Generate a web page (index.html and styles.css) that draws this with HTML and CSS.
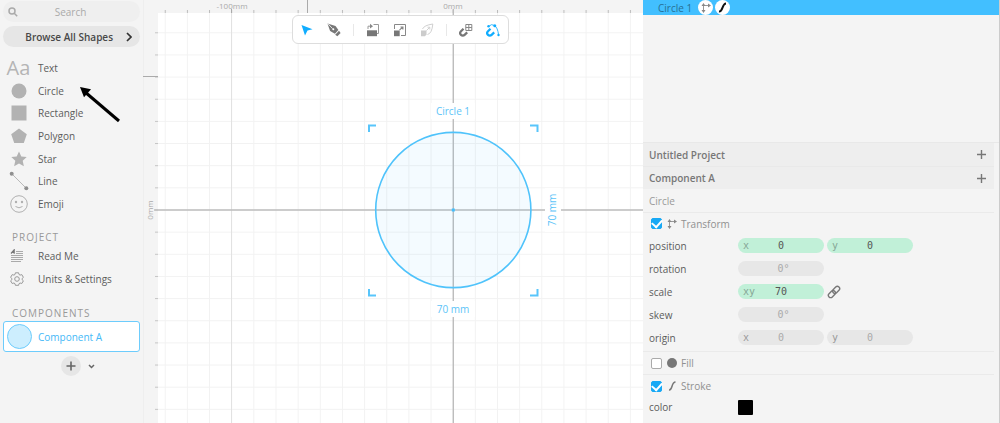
FILE: index.html
```html
<!DOCTYPE html>
<html lang="en">
<head>
<meta charset="utf-8">
<title>Untitled Project</title>
<link rel="stylesheet" href="styles.css">
</head>
<body>
<div class="app">
  <aside class="sidebar">
    <label class="search">
      <svg class="search-icon" viewBox="0 0 10 10" aria-hidden="true"><circle cx="4" cy="4" r="3"/><path d="M6.200 6.200L9.200 9.200"/></svg>
      <input class="search-input" type="text" placeholder="Search" aria-label="Search">
    </label>
    <button class="browse">Browse All Shapes
      <svg class="browse-arrow" viewBox="0 0 6 10" aria-hidden="true"><path d="M1 1l4 4-4 4"/></svg>
    </button>
    <nav class="shapes" aria-label="Shapes">
      <button class="item"><span class="glyph glyph-text" aria-hidden="true">Aa</span>Text</button>
      <button class="item"><span class="glyph"><svg width="16" height="16"><circle cx="8" cy="8" r="7.500" fill="#b2b2b2"/></svg></span>Circle</button>
      <button class="item"><span class="glyph"><svg width="16" height="16"><path d="M.500.500h15v15H.500z" fill="#b2b2b2"/></svg></span>Rectangle</button>
      <button class="item"><span class="glyph"><svg width="16" height="16"><path d="M8 .500L15.800 6.200 12.800 15H3.200L.200 6.200z" fill="#b2b2b2"/></svg></span>Polygon</button>
      <button class="item"><span class="glyph"><svg width="16" height="16"><path d="M8 .500l2.300 5 5.400.500-4 3.700 1.200 5.500L8 12.400l-4.900 2.800 1.200-5.500-4-3.700 5.400-.500z" fill="#b2b2b2"/></svg></span>Star</button>
      <button class="item"><span class="glyph"><svg width="20" height="20"><path d="M3 3l14 14" stroke="#b8b8b8"/><circle cx="2.700" cy="2.700" r="2" fill="#8f8f8f"/><circle cx="17.300" cy="17.300" r="2" fill="#8f8f8f"/></svg></span>Line</button>
      <button class="item"><span class="glyph"><svg width="18" height="18" fill="none" stroke="#b0b0b0"><circle cx="9" cy="9" r="8.300"/><path d="M5.500 11.500q3.500 2.600 7 0"/><circle cx="6" cy="7" r="1.200" fill="#b0b0b0" stroke="none"/><circle cx="12" cy="7" r="1.200" fill="#b0b0b0" stroke="none"/></svg></span>Emoji</button>
    </nav>
    <h2 class="heading">PROJECT</h2>
    <nav class="project" aria-label="Project">
      <button class="item"><span class="glyph glyph-small"><svg width="14" height="14" fill="none" stroke="#aaa"><path d="M6 2.500h7M6 4.500h7M1 6.500h12M1 8.500h12M1 10.500h12M1 12.500h10"/><path d="M1 4.500L4.200.800v3.900M2 3.500h2" stroke="#777" stroke-width="1.200"/></svg></span>Read Me</button>
      <button class="item"><span class="glyph glyph-small"><svg width="14" height="14" fill="none" stroke="#999" stroke-linejoin="round"><circle cx="7" cy="7" r="2.300"/><path d="M5.400.800h3.200l.400 1.700 1.100.600 1.700-.500 1.600 2.800-1.300 1.100v1.200l1.300 1.100-1.600 2.700-1.700-.500-1.100.700-.400 1.600H5.400L5 11.700 3.900 11l-1.700.500L.600 8.800l1.300-1.100V6.500L.600 5.400l1.600-2.800 1.700.500L5 2.500z"/></svg></span>Units &amp; Settings</button>
    </nav>
    <h2 class="heading heading-components">COMPONENTS</h2>
    <button class="component"><span class="component-thumb"></span>Component A</button>
    <div class="add">
      <button class="add-button" aria-label="Add component"><svg width="10" height="10"><path d="M5 .500v9M.500 5h9" stroke="#666" stroke-width="1.600"/></svg></button>
      <button class="add-more" aria-label="More"><svg width="7" height="5"><path d="M1 1l2.500 2.500L6 1" fill="none" stroke="#666" stroke-width="1.500"/></svg></button>
    </div>
    <svg class="pointer" viewBox="0 0 42 38" aria-hidden="true"><path d="M6 6L40 35" stroke="#000" stroke-width="3"/><path d="M1 1l11 2.200-7 8z"/></svg>
  </aside>

  <main class="stage">
    <svg class="drawing" role="img" aria-label="Drawing with Circle 1">
      <defs>
        <pattern id="grid" x="309.700" y="209.500" width="22.150" height="22.150" patternUnits="userSpaceOnUse"><path d="M.500 0v22.150M0 .500h22.150" stroke="#f2f2f2" fill="none"/></pattern>
        <pattern id="ticksX" x="309.700" y="0" width="22.150" height="13" patternUnits="userSpaceOnUse"><path d="M.500 10v3" stroke="#bbb"/></pattern>
        <pattern id="ticksY" x="0" y="209.500" width="15" height="22.150" patternUnits="userSpaceOnUse"><path d="M12 .500h3" stroke="#c4c4c4"/></pattern>
      </defs>
      <rect width="100%" height="100%" fill="#f4f4f4"/>
      <path d="M.500 0V2000" stroke="#eee"/>
      <rect x="15" y="13" width="100%" height="100%" fill="#fff"/>
      <rect x="15" y="13" width="100%" height="100%" fill="url(#grid)"/>
      <rect x="15" y="0" width="100%" height="13" fill="url(#ticksX)"/>
      <rect x="0" y="13" width="15" height="100%" fill="url(#ticksY)"/>
      <path d="M88.500 13V2000" stroke="#e2e2e2"/>
      <path d="M88.500 9v4M164.500 0v13M0 76.500h15" stroke="#aaa"/>
      <path d="M310.300 9V2000M11 210H3000" stroke="#bdbdbd" stroke-width="1.400"/>
      <text class="ruler-text" x="89" y="9">-100mm</text>
      <text class="ruler-text" x="310" y="9">0mm</text>
      <text class="ruler-text" transform="translate(10 210) rotate(-90)">0mm</text>
      <circle cx="310.300" cy="210" r="77.600" fill="#42bfff" fill-opacity=".06" stroke="#4fc3fb" stroke-width="1.600"/>
      <path d="M308.800 208.500h3v3h-3z" fill="#42bfff"/>
      <g fill="none" stroke="#58c5fb" stroke-width="2"><path d="M226 132v-6.500h7M387 125.500h7.500v6.500M226 289v6.500h7M387 295.500h7.500v-6.500"/></g>
      <path d="M288 103h44v16h-44zM288 301h44v16h-44zM402 188h16v44h-16z" fill="#fff"/>
      <text class="size-text" x="310" y="115">Circle 1</text>
      <text class="size-text size-value" x="310" y="313">70 mm</text>
      <text class="size-text size-value" transform="translate(413 210) rotate(-90)">70 mm</text>
    </svg>
    <div class="toolbar-area">
      <div class="toolbar" role="toolbar" aria-label="Tools">
        <button class="tool" aria-label="Select"><svg viewBox="0 0 14 14"><path d="M1.500 2l11 4.200-5 1.300L5 12.500z" fill="#10adff"/></svg></button>
        <button class="tool" aria-label="Pen"><svg viewBox="0 0 14 14"><path d="M.500.500l8 2.600 2.900 4-3.500 3.700-4.800-2.900z" fill="#777"/><path d="M1 .800l4.500 4.800" stroke="#fff" stroke-width=".8"/><circle cx="6.300" cy="6.200" r="1" fill="#fff"/><path d="M12 7.700l1.600 2.400-3.200 3.200-2.200-1.600z" fill="#777"/></svg></button>
        <span class="divider"></span>
        <button class="tool" aria-label="Rotate"><svg viewBox="0 0 14 14"><path d="M1 7.300h10v5.900H1z" fill="#777"/><path d="M7.500 1.500h5v9H11M2 6V3.200h3" fill="none" stroke="#999"/><path d="M4 .700l3 2.500L4 5.500z" fill="#888"/></svg></button>
        <button class="tool" aria-label="Scale"><svg viewBox="0 0 14 14"><path d="M1 7.500h5.700v5.700H1z" fill="#777"/><path d="M1.500 6V1.500h11v11H8" fill="none" stroke="#888"/><path d="M6.500 7.200L9.500 4.200M7.500 4h2.400v2.600" fill="none" stroke="#888" stroke-width="1.200"/></svg></button>
        <button class="tool" aria-label="Skew" disabled><svg viewBox="0 0 14 14"><path d="M1 7.500h5.500v4L5 13.200H1z" fill="#ccc"/><path d="M2.500 6Q4 2.300 12.800 1 12 10.500 7.500 11.500M6.500 7.500l3-3M7.500 4.200h2.300v2.300" fill="none" stroke="#d0d0d0"/></svg></button>
        <span class="divider"></span>
        <button class="tool" aria-label="Snap to grid"><svg viewBox="0 0 14 14"><path d="M4.500 5.700L2 8.300a2.500 2.500 0 003.600 3.600L8.200 9.400" fill="none" stroke="#777" stroke-width="2.200"/><path d="M6.800 1.500h6v6h-6zM9.800 1.500v6M6.800 4.500h6" fill="none" stroke="#888"/></svg></button>
        <button class="tool" aria-label="Snap to shapes"><svg viewBox="0 0 14 14"><path d="M4.500 5.700L2 8.300a2.500 2.500 0 003.600 3.600L8.200 9.400" fill="none" stroke="#10adff" stroke-width="2.200"/><path d="M2.500 3.500Q5.500.300 8.500 2.500q3.200 2.200 4 9" fill="none" stroke="#35b9ff"/><circle cx="2.500" cy="3.300" r="1.200" fill="#10adff"/><circle cx="8.800" cy="2.800" r="1.500" fill="#10adff"/><circle cx="12.500" cy="12" r="1.200" fill="#10adff"/></svg></button>
      </div>
    </div>
  </main>

  <aside class="panel">
    <div class="layers">
      <button class="layer">Circle 1
        <span class="badges">
          <span class="badge"><svg class="axes" viewBox="0 0 10 10"><path class="axes-line" d="M2.500 3v5M3.500 2.500H8"/><path d="M.500 7h4l-2 3zM7 .500v4l3-2zM.500 3l2-3 2 3z"/></svg></span>
          <span class="badge"><svg width="9" height="11"><path d="M1 9.500C5 10 4 1.500 8 1.500" fill="none" stroke="#111" stroke-width="2"/></svg></span>
        </span>
      </button>
    </div>
    <div class="inspector">
      <div class="bar">Untitled Project <button class="plus" aria-label="Add to project"><svg width="9" height="9"><path d="M4.500 0v9M0 4.500h9" stroke="#777" stroke-width="1.400"/></svg></button></div>
      <div class="bar">Component A <button class="plus" aria-label="Add to component"><svg width="9" height="9"><path d="M4.500 0v9M0 4.500h9" stroke="#777" stroke-width="1.400"/></svg></button></div>
      <div class="title">Circle</div>
      <section class="group">
        <label class="toggle"><input class="check" type="checkbox" checked><svg class="axes" viewBox="0 0 10 10"><path class="axes-line" d="M2.500 3v5M3.500 2.500H8"/><path d="M.500 7h4l-2 3zM7 .500v4l3-2zM.500 3l2-3 2 3z"/></svg>Transform</label>
        <div class="row"><span class="name">position</span>
          <label class="field set"><span class="axis">x</span><input class="value" type="text" value="0"></label>
          <label class="field set"><span class="axis">y</span><input class="value" type="text" value="0"></label></div>
        <div class="row"><label class="name" for="rotation">rotation</label>
          <span class="field"><input class="value angle" id="rotation" type="text" value="0°"></span></div>
        <div class="row"><span class="name">scale</span>
          <label class="field set"><span class="axis">xy</span><input class="value" type="text" value="70"></label>
          <button class="link" aria-label="Link axes"><svg width="14" height="14" fill="none" stroke="#777" stroke-width="1.400"><g transform="rotate(-45 7 7)"><rect x="0" y="4.700" width="8" height="4.600" rx="2.300"/><rect x="6" y="4.700" width="8" height="4.600" rx="2.300"/></g></svg></button></div>
        <div class="row"><label class="name" for="skew">skew</label>
          <span class="field"><input class="value angle" id="skew" type="text" value="0°"></span></div>
        <div class="row"><span class="name">origin</span>
          <label class="field"><span class="axis">x</span><input class="value" type="text" value="0"></label>
          <label class="field"><span class="axis">y</span><input class="value" type="text" value="0"></label></div>
      </section>
      <section class="group">
        <label class="toggle"><input class="check" type="checkbox"><svg class="kind" viewBox="0 0 10 10"><circle cx="5" cy="5" r="5" fill="#777"/></svg>Fill</label>
      </section>
      <section class="group">
        <label class="toggle"><input class="check" type="checkbox" checked><svg class="kind" viewBox="0 0 10 10"><path d="M2 9C6 9.500 4 1 8.500 1" fill="none" stroke="#777" stroke-width="1.500"/></svg>Stroke</label>
        <div class="row row-color"><span class="name">color</span><button class="swatch" aria-label="Stroke color"></button></div>
      </section>
    </div>
  </aside>
</div>
</body>
</html>
```

FILE: styles.css
```css
* { box-sizing: border-box; }

body {
  margin: 0;
  font-family: "Open Sans", "Noto Sans", sans-serif;
  font-size: 10px;
  line-height: 14px;
  color: #5c5c5c;
  background: #f4f4f4;
}

button {
  margin: 0;
  padding: 0;
  border: 0;
  background: none;
  font: inherit;
  color: inherit;
  text-align: left;
}

input { font: inherit; color: inherit; }
svg { display: block; flex: none; }

.app {
  display: grid;
  grid-template-columns: 143px minmax(0, 1fr) 357px;
  height: 100vh;
  overflow: hidden;
}

/* Sidebar */
.sidebar {
  position: relative;
  display: flex;
  flex-direction: column;
  padding: 1px 3px;
}

.search {
  display: flex;
  align-items: center;
  height: 21px;
  padding: 0 5px;
  border-radius: 11px;
  background: #efefef;
}

.search-icon {
  width: 10px;
  height: 10px;
  fill: none;
  stroke: #aaa;
  stroke-width: 1.5;
}

.search-input {
  flex: 1;
  min-width: 0;
  padding: 0 12px 0 0;
  border: 0;
  outline: 0;
  background: none;
  text-align: center;
}

.search-input::placeholder { color: #aaa; opacity: 1; }

.browse {
  display: flex;
  align-items: center;
  justify-content: flex-end;
  gap: 13px;
  height: 21px;
  margin-top: 4px;
  padding-right: 8px;
  border-radius: 11px;
  background: #e6e6e6;
  color: #484848;
  font-weight: 600;
}

.browse-arrow {
  width: 6px;
  height: 10px;
  fill: none;
  stroke: #333;
  stroke-width: 1.7;
}

.shapes {
  display: grid;
  grid-auto-rows: 1fr;
  height: 158px;
  margin-top: 10px;
}

.item {
  display: flex;
  align-items: center;
  gap: 6px;
  padding-left: 2px;
}

.glyph {
  display: flex;
  justify-content: center;
  width: 27px;
}

.glyph-text {
  color: #b5b5b5;
  font-size: 20px;
  line-height: 22px;
}

.glyph-small { padding-right: 4px; }

.heading {
  margin: 15px 0 0 9px;
  font-size: 10px;
  font-weight: 500;
  line-height: 14px;
  letter-spacing: 1px;
  color: #999;
}

.project {
  display: grid;
  grid-auto-rows: 23px;
}

.heading-components { margin-top: 16px; }

.component {
  display: flex;
  align-items: center;
  gap: 6px;
  height: 31px;
  margin-top: 1px;
  padding-left: 3px;
  border: 1px solid #6dccfc;
  border-radius: 3px;
  background: #fff;
  color: #45b9f7;
}

.component-thumb {
  width: 25px;
  height: 25px;
  border: 1px solid #6dccfc;
  border-radius: 50%;
  background: #cdeefe;
}

.add {
  display: flex;
  align-items: center;
  gap: 7px;
  margin: 4px 0 0 58px;
}

.add-button {
  display: grid;
  place-items: center;
  width: 20px;
  height: 20px;
  border-radius: 50%;
  background: #e6e6e6;
}

.pointer {
  position: absolute;
  top: 86px;
  left: 79px;
  width: 42px;
  height: 38px;
}

/* Stage */
.stage {
  position: relative;
  overflow: hidden;
}

.drawing { width: 100%; height: 100%; }

.ruler-text {
  font-size: 8px;
  fill: #aaa;
  text-anchor: middle;
}

.size-text {
  font-size: 10px;
  fill: #5cc4f8;
  text-anchor: middle;
}

.size-value { font-weight: 500; }

.toolbar-area {
  position: absolute;
  top: 15px;
  right: 0;
  left: 15px;
  display: flex;
  justify-content: center;
}

.toolbar {
  display: flex;
  align-items: center;
  gap: 13px;
  height: 29px;
  padding: 0 8px 0 7px;
  border: 1px solid #ddd;
  border-radius: 6px;
  background: #fff;
}

.tool svg { width: 14px; height: 14px; }

.divider {
  width: 1px;
  height: 12px;
  margin: 0 -1px;
  background: #e8e8e8;
}

/* Panel */
.panel {
  display: flex;
  flex-direction: column;
  border-right: 1px solid #ccc;
}

.layers {
  height: 143px;
  border-bottom: 1px solid #e8e8e8;
}

.layer {
  display: flex;
  align-items: center;
  gap: 6px;
  width: 100%;
  height: 15px;
  padding-left: 15px;
  background: #42bfff;
  color: #286f94;
}

.badges { display: flex; gap: 2px; }

.badge {
  display: grid;
  place-items: center;
  width: 15px;
  height: 15px;
  border-radius: 50%;
  background: #fff;
}

.axes {
  width: 10px;
  height: 10px;
  fill: #888;
}

.axes-line {
  stroke: #999;
  stroke-width: 1;
}

.inspector { padding-right: 5px; }

.bar {
  display: flex;
  align-items: center;
  justify-content: space-between;
  height: 23px;
  padding: 0 8px 0 6px;
  background: #eee;
  font-weight: 600;
  color: #777;
}

.bar + .bar { border-top: 1px solid #e9e9e9; }

.title {
  height: 23px;
  padding: 5px 6px;
  color: #999;
}

.group {
  padding: 0 6px;
  border-top: 1px solid #eaeaea;
}

.group:nth-of-type(1) { padding-bottom: 2px; }

.toggle {
  display: flex;
  align-items: center;
  gap: 4px;
  height: 21px;
  padding-left: 2px;
  color: #909090;
}

.group + .group .toggle { height: 22px; }

.check {
  appearance: none;
  display: grid;
  place-items: center;
  width: 11px;
  height: 11px;
  margin: 0 1px 0 0;
  border: 1px solid #aaa;
  border-radius: 2px;
  background: #fff;
}

.check:checked { border-color: #18a9f5; background: #18a9f5; }

.check:checked::after {
  content: "";
  width: 8px;
  height: 5px;
  margin-bottom: 2px;
  border: solid #fff;
  border-width: 0 0 2px 2px;
  transform: rotate(-48deg);
}

.kind { width: 10px; height: 10px; }

.row {
  display: flex;
  align-items: center;
  gap: 3px;
  height: 23px;
}

.row-color { height: 20px; }
.name { width: 86px; }

.field {
  display: grid;
  grid-template-columns: 20px 1fr 20px;
  align-items: center;
  width: 86px;
  height: 15px;
  padding: 0 5px;
  border-radius: 8px;
  background: #e7e7e7;
  color: #aaa;
  font-family: "DejaVu Sans Mono", monospace;
  line-height: 13px;
}

.set { background: #c1f0d8; color: #555; }
.axis { color: #999; }
.set .axis { color: #86a796; }

.value {
  grid-column: 2;
  width: 100%;
  min-width: 0;
  height: 13px;
  padding: 0;
  border: 0;
  outline: 0;
  background: none;
  text-align: center;
}

.angle { padding-left: 5px; }

.swatch {
  width: 15px;
  height: 15px;
  border-radius: 1px;
  background: #000;
}
```
